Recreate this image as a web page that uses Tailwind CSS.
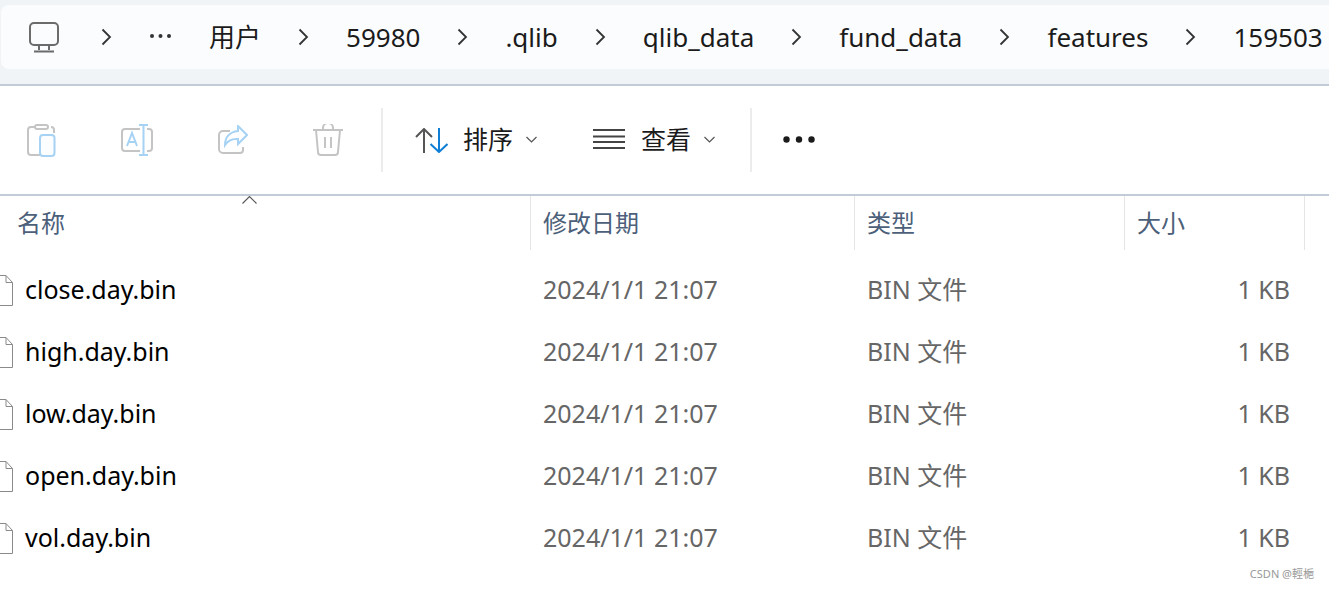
<!DOCTYPE html>
<html lang="en">

<head>
    <meta charset="UTF-8">
    <title>features</title>
    <script src="https://cdn.jsdelivr.net/npm/@tailwindcss/browser@4"></script>
</head>

<body class="bg-white overflow-hidden font-['Noto_Sans','Noto_Sans_CJK_SC',sans-serif]">
    <div class="relative w-[1329px] h-[589px] overflow-hidden">

        <!-- address bar -->
        <div class="h-[86px] bg-[#f1f4f7] border-b-2 border-[#c2ccd8] pt-[5px] pl-[1px]">
            <div class="h-[64px] bg-[#fbfcfe] rounded-l-lg flex items-center pl-[27px] gap-[37px] text-[26px] text-[#1b1b1b] whitespace-nowrap">
                <svg class="w-[32px] h-[32px] -mt-[1px] mr-[4px]" viewBox="0 0 32 32" fill="none" stroke="#6b6b6b" stroke-width="2">
                    <rect x="2" y="2" width="28" height="22" rx="4" />
                    <path d="M11 24v5M21 24v5M6 30.500h20" />
                </svg>
                <svg class="w-[11px] h-[18px]" viewBox="0 0 11 18" fill="none" stroke="#333" stroke-width="1.800"><path d="M1.500 1.500 9 9l-7.500 7.500" /></svg>
                <svg class="w-[23px] h-[6px] -mt-[3px]" viewBox="0 0 23 6" fill="#333"><circle cx="3" cy="3" r="2" /><circle cx="11.500" cy="3" r="2" /><circle cx="20" cy="3" r="2" /></svg>
                <span>用户</span>
                <svg class="w-[11px] h-[18px]" viewBox="0 0 11 18" fill="none" stroke="#333" stroke-width="1.800"><path d="M1.500 1.500 9 9l-7.500 7.500" /></svg>
                <span>59980</span>
                <svg class="w-[11px] h-[18px]" viewBox="0 0 11 18" fill="none" stroke="#333" stroke-width="1.800"><path d="M1.500 1.500 9 9l-7.500 7.500" /></svg>
                <span>.qlib</span>
                <svg class="w-[11px] h-[18px]" viewBox="0 0 11 18" fill="none" stroke="#333" stroke-width="1.800"><path d="M1.500 1.500 9 9l-7.500 7.500" /></svg>
                <span>qlib_data</span>
                <svg class="w-[11px] h-[18px]" viewBox="0 0 11 18" fill="none" stroke="#333" stroke-width="1.800"><path d="M1.500 1.500 9 9l-7.500 7.500" /></svg>
                <span>fund_data</span>
                <svg class="w-[11px] h-[18px]" viewBox="0 0 11 18" fill="none" stroke="#333" stroke-width="1.800"><path d="M1.500 1.500 9 9l-7.500 7.500" /></svg>
                <span>features</span>
                <svg class="w-[11px] h-[18px]" viewBox="0 0 11 18" fill="none" stroke="#333" stroke-width="1.800"><path d="M1.500 1.500 9 9l-7.500 7.500" /></svg>
                <span>159503</span>
            </div>
        </div>

        <!-- command bar -->
        <div class="h-[110px] border-b-2 border-[#c2ccd8] flex items-center text-[#1b1b1b] text-[25px]">
            <div class="flex items-center pl-[27px] gap-[65px]">
                <svg class="w-[29px] h-[33px]" viewBox="0 0 29 33" fill="none" stroke-width="2">
                    <path d="M8 3H4a3 3 0 0 0-3 3v22a3 3 0 0 0 3 3h9M24 3a3 3 0 0 1 3 3v3" stroke="#c4c4c4" />
                    <rect x="8" y="1" width="13" height="4" rx="2" stroke="#c4c4c4" />
                    <rect x="13" y="11" width="14.500" height="21" rx="3" stroke="#a6d2f4" fill="#fbfdff" />
                </svg>
                <svg class="w-[32px] h-[32px]" viewBox="0 0 32 32" fill="none" stroke-width="2">
                    <path d="M19 5h-15a3 3 0 0 0-3 3v16a3 3 0 0 0 3 3h15M26 5h2a3 3 0 0 1 3 3v16a3 3 0 0 1-3 3h-2" stroke="#c4c4c4" />
                    <path d="M18 1h9M18 31h9M22.500 1v30M6 22l5-13 5 13M8 18h6" stroke="#a6d2f4" />
                </svg>
                <svg class="w-[30px] h-[30px]" viewBox="0 0 30 30" fill="none" stroke-width="2">
                    <path d="M12 6H5a4 4 0 0 0-4 4v14a4 4 0 0 0 4 4h17a3 3 0 0 0 3-3v-3" stroke="#c4c4c4" />
                    <path d="M20 1l9 9-9 9v-5c-6-.5-10 1-13 6 0-7 4-13 13-14z" stroke="#a6d2f4" fill="#fff" />
                </svg>
                <svg class="w-[30px] h-[32px]" viewBox="0 0 30 32" fill="none" stroke="#c4c4c4" stroke-width="2">
                    <path d="M0 6h30M10 6V4a3 3 0 0 1 10 0v2M3 6l2 22a3 3 0 0 0 3 3h14a3 3 0 0 0 3-3l2-22M12 13v11M18 13v11" />
                </svg>
            </div>
            <div class="w-[2px] h-[64px] bg-[#ececec] ml-[38px]"></div>
            <svg class="w-[33px] h-[25px] ml-[32px]" viewBox="0 0 33 25" fill="none" stroke-width="2">
                <path d="M9 25V1M1 9l8-8 8 8" stroke="#555" />
                <path d="M24 0v24M15.500 16l8.500 8 8.500-8" stroke="#0f7fd6" />
            </svg>
            <span class="ml-[15px]">排序</span>
            <svg class="w-[11px] h-[7px] ml-[13px] -mt-[1px]" viewBox="0 0 11 7" fill="none" stroke="#555" stroke-width="1.200"><path d="M.500 1l5 5 5-5" /></svg>
            <svg class="w-[32px] h-[20px] ml-[56px] -mt-[2px]" viewBox="0 0 32 20" fill="none" stroke="#444" stroke-width="2"><path d="M0 1h32M0 7.500h32M0 13h32M0 19h32" /></svg>
            <span class="ml-[16px]">查看</span>
            <svg class="w-[11px] h-[7px] ml-[13px] -mt-[1px]" viewBox="0 0 11 7" fill="none" stroke="#555" stroke-width="1.200"><path d="M.500 1l5 5 5-5" /></svg>
            <div class="w-[2px] h-[64px] bg-[#ececec] ml-[35px]"></div>
            <svg class="w-[32px] h-[7px] ml-[31px] -mt-[1px]" viewBox="0 0 32 7" fill="#1b1b1b"><circle cx="3.500" cy="3.500" r="3.200" /><circle cx="16" cy="3.500" r="3.200" /><circle cx="28.500" cy="3.500" r="3.200" /></svg>
        </div>

        <!-- column headers -->
        <div class="relative h-[54px] grid grid-cols-[531px_324px_270px_180px] items-stretch text-[24px] text-[#4c607a]">
            <div class="relative border-r border-[#e5e5e5] pl-[17px] flex items-center">
                名称
                <svg class="absolute left-[242px] top-[0px] w-[15px] h-[8px]" viewBox="0 0 15 8" fill="none" stroke="#555" stroke-width="1.100"><path d="M.500 7.500l7-7 7 7" /></svg>
            </div>
            <div class="border-r border-[#e5e5e5] pl-[12px] flex items-center">修改日期</div>
            <div class="border-r border-[#e5e5e5] pl-[12px] flex items-center">类型</div>
            <div class="border-r border-[#e5e5e5] pl-[12px] flex items-center">大小</div>
        </div>

        <!-- files -->
        <div class="pt-[9px] text-[25px] text-[#666666]">
            <div class="h-[62px] grid grid-cols-[531px_324px_270px_178px] items-center">
                <div class="flex items-center gap-[12px] text-black">
                    <svg class="w-[13px] h-[31px] shrink-0" viewBox="0 0 13 31" fill="#fff" stroke="#8a8a8a"><path d="M-4 .500h10l6.500 7v23h-16.500zM6 .500v7h6.500" /></svg>
                    <span>close.day.bin</span>
                </div>
                <div class="pl-[12px]">2024/1/1 21:07</div>
                <div class="pl-[12px]">BIN 文件</div>
                <div class="text-right pr-[13px]">1 KB</div>
            </div>
            <div class="h-[62px] grid grid-cols-[531px_324px_270px_178px] items-center">
                <div class="flex items-center gap-[12px] text-black">
                    <svg class="w-[13px] h-[31px] shrink-0" viewBox="0 0 13 31" fill="#fff" stroke="#8a8a8a"><path d="M-4 .500h10l6.500 7v23h-16.500zM6 .500v7h6.500" /></svg>
                    <span>high.day.bin</span>
                </div>
                <div class="pl-[12px]">2024/1/1 21:07</div>
                <div class="pl-[12px]">BIN 文件</div>
                <div class="text-right pr-[13px]">1 KB</div>
            </div>
            <div class="h-[62px] grid grid-cols-[531px_324px_270px_178px] items-center">
                <div class="flex items-center gap-[12px] text-black">
                    <svg class="w-[13px] h-[31px] shrink-0" viewBox="0 0 13 31" fill="#fff" stroke="#8a8a8a"><path d="M-4 .500h10l6.500 7v23h-16.500zM6 .500v7h6.500" /></svg>
                    <span>low.day.bin</span>
                </div>
                <div class="pl-[12px]">2024/1/1 21:07</div>
                <div class="pl-[12px]">BIN 文件</div>
                <div class="text-right pr-[13px]">1 KB</div>
            </div>
            <div class="h-[62px] grid grid-cols-[531px_324px_270px_178px] items-center">
                <div class="flex items-center gap-[12px] text-black">
                    <svg class="w-[13px] h-[31px] shrink-0" viewBox="0 0 13 31" fill="#fff" stroke="#8a8a8a"><path d="M-4 .500h10l6.500 7v23h-16.500zM6 .500v7h6.500" /></svg>
                    <span>open.day.bin</span>
                </div>
                <div class="pl-[12px]">2024/1/1 21:07</div>
                <div class="pl-[12px]">BIN 文件</div>
                <div class="text-right pr-[13px]">1 KB</div>
            </div>
            <div class="h-[62px] grid grid-cols-[531px_324px_270px_178px] items-center">
                <div class="flex items-center gap-[12px] text-black">
                    <svg class="w-[13px] h-[31px] shrink-0" viewBox="0 0 13 31" fill="#fff" stroke="#8a8a8a"><path d="M-4 .500h10l6.500 7v23h-16.500zM6 .500v7h6.500" /></svg>
                    <span>vol.day.bin</span>
                </div>
                <div class="pl-[12px]">2024/1/1 21:07</div>
                <div class="pl-[12px]">BIN 文件</div>
                <div class="text-right pr-[13px]">1 KB</div>
            </div>
        </div>

        <!-- watermark -->
        <div class="absolute right-[15px] bottom-[7px] text-[11px] text-[#999999]">CSDN @輕梔</div>
    </div>
</body>

</html>
